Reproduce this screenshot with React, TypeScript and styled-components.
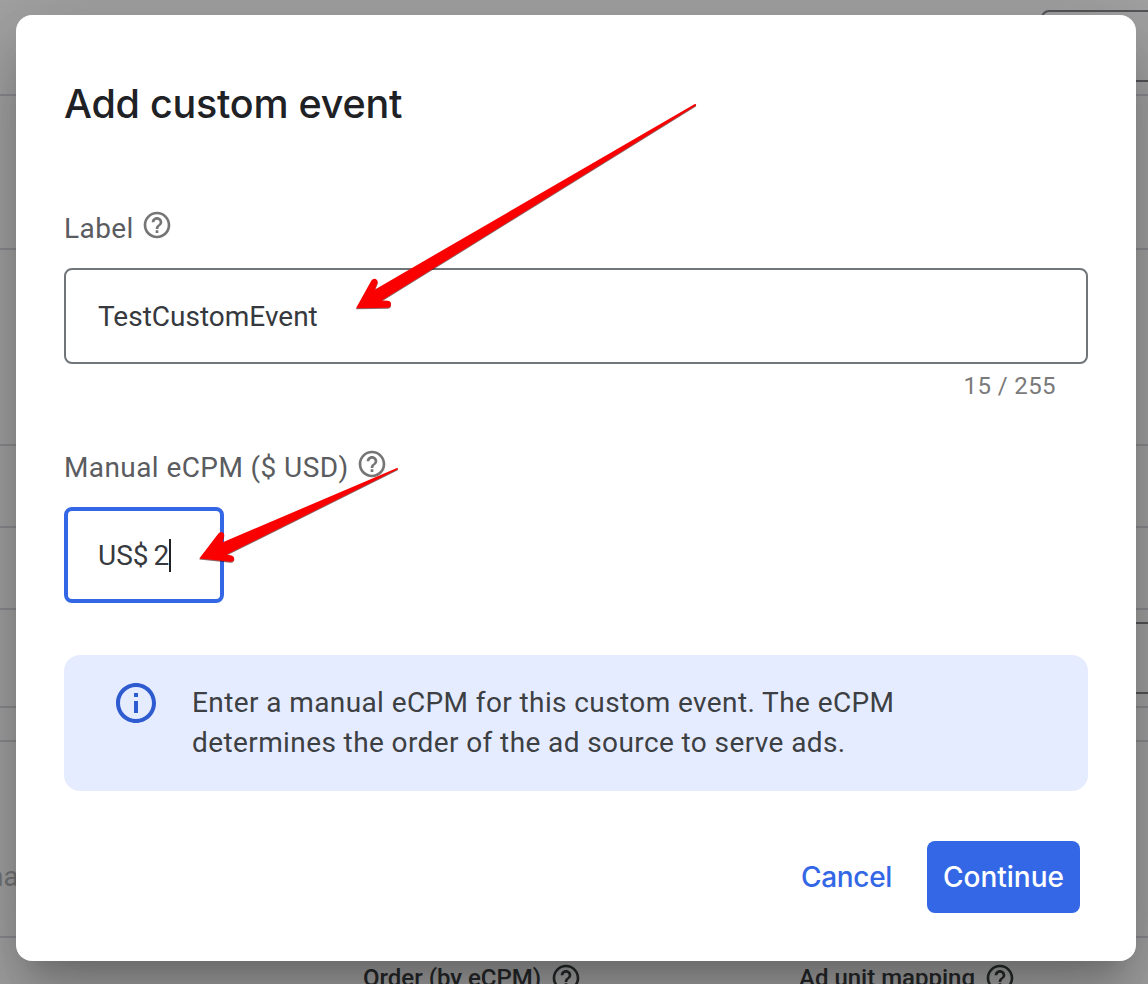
import React from 'react';
import styled, { createGlobalStyle } from 'styled-components';

const GlobalStyle = createGlobalStyle`
  * { box-sizing: border-box; }
  body {
    margin: 0;
    overflow: hidden;
    font-family: Roboto, sans-serif;
    -webkit-font-smoothing: antialiased;
  }
`;

const Screen = styled.div`
  position: relative;
  width: 1148px;
  height: 984px;
  overflow: hidden;
  background: #fff;
`;

const Page = styled.div`
  display: flex;
  flex-direction: column;
`;

const Section = styled.div<{ $height: number }>`
  display: flex;
  justify-content: flex-end;
  height: ${(p) => p.$height}px;
  border-bottom: 2px solid #dadce0;
`;

const OutlineBox = styled.div<{ $width: number; $top: number }>`
  flex: none;
  width: ${(p) => p.$width}px;
  height: 72px;
  margin-top: ${(p) => p.$top}px;
  margin-right: -20px;
  border: 2px solid #85878c;
  border-radius: 8px;
`;

const SectionName = styled.span`
  margin: 119px auto 0 -12px;
  font-size: 28px;
  line-height: 32px;
  color: #b6b8bb;
`;

const TableHead = styled.div`
  display: grid;
  grid-template-columns: 436px 1fr;
  padding: 22px 0 0 363px;
`;

const HeadCell = styled.div`
  display: flex;
  align-items: center;
  gap: 9px;
  height: 36px;
  font-size: 24px;
  font-weight: 500;
  color: #3c4043;
  white-space: nowrap;
`;

const Backdrop = styled.div`
  position: absolute;
  inset: 0;
  padding: 15px 12px 23px 16px;
  background: rgba(0, 0, 0, 0.36);
`;

const Dialog = styled.div`
  display: flex;
  flex-direction: column;
  height: 946px;
  padding: 65px 48px 48px;
  border-radius: 16px;
  background: #fff;
  box-shadow:
    0 22px 30px -14px rgba(0, 0, 0, 0.2),
    0 48px 76px 6px rgba(0, 0, 0, 0.14),
    0 18px 92px 16px rgba(0, 0, 0, 0.12);

  > * { flex-shrink: 0; }
`;

const Title = styled.h1`
  margin: 0 0 84px;
  font-family: 'Google Sans', Inter, sans-serif;
  font-size: 39.5px;
  font-weight: 500;
  line-height: 48px;
  letter-spacing: -0.26px;
  color: #202124;
`;

const FieldLabel = styled.label`
  display: flex;
  align-items: center;
  height: 32px;
  margin-bottom: 24px;
  padding-top: 2px;
  font-size: 28px;
  line-height: 32px;
  letter-spacing: 0.41px;
  color: #5a5c5f;

  svg { margin: -9px 0 0 7.5px; }
`;

const Field = styled.div<{ $focused?: boolean }>`
  display: flex;
  align-items: center;
  width: ${(p) => (p.$focused ? '160px' : '100%')};
  height: 96px;
  padding: 0 ${(p) => (p.$focused ? 30 : 32)}px;
  border: ${(p) => (p.$focused ? '4px solid #3367e6' : '2px solid #70757a')};
  border-radius: 8px;
  font-size: 28px;
  color: #36393d;
  white-space: nowrap;
`;

const Prefix = styled.span`
  margin-right: 5px;
`;

const Caret = styled.span`
  width: 2px;
  height: 33px;
  background: #202124;
`;

const Counter = styled.div`
  height: 87px;
  padding: 8px 32px 0;
  font-size: 24px;
  line-height: 28px;
  letter-spacing: 0.4px;
  text-align: right;
  color: #7a7a7a;
`;

const Notice = styled.div`
  display: flex;
  height: 136px;
  margin-top: 52px;
  padding: 24px 48px;
  gap: 32px;
  border-radius: 16px;
  background: #e6ecff;
`;

const NoticeText = styled.p`
  margin: 4px 0 0;
  font-size: 28px;
  line-height: 40px;
  letter-spacing: 0.4px;
  color: #3c4043;
  white-space: nowrap;
`;

const Actions = styled.div`
  display: flex;
  justify-content: flex-end;
  gap: 19px;
  margin-top: 50px;
  padding-right: 8px;
`;

const Button = styled.button<{ $primary?: boolean }>`
  height: 72px;
  width: ${(p) => (p.$primary ? 153 : 123)}px;
  padding: 0;
  border: 0;
  border-radius: 8px;
  background: ${(p) => (p.$primary ? '#3367e6' : 'transparent')};
  color: ${(p) => (p.$primary ? '#fff' : '#3367e6')};
  font-family: 'Google Sans', Inter, sans-serif;
  font-size: 28px;
  font-weight: 500;
  letter-spacing: ${(p) => (p.$primary ? 0 : -0.3)}px;
  white-space: nowrap;
`;

const Arrows = styled.svg`
  position: absolute;
  inset: 0;
  pointer-events: none;
  filter: drop-shadow(0 1px 0.6px rgba(60, 0, 0, 0.6));
`;

const HelpIcon = ({ color }: { color: string }) => (
  <svg width="32" height="32" viewBox="0 0 24 24" fill={color}>
    <path d="M11 18h2v-2h-2v2zm1-16C6.48 2 2 6.48 2 12s4.48 10 10 10 10-4.48 10-10S17.52 2 12 2zm0 18c-4.41 0-8-3.59-8-8s3.59-8 8-8 8 3.59 8 8-3.59 8-8 8zm0-14c-2.21 0-4 1.79-4 4h2c0-1.1.9-2 2-2s2 .9 2 2c0 2-3 1.75-3 5h2c0-2.25 3-2.5 3-5 0-2.21-1.79-4-4-4z" />
  </svg>
);

const InfoIcon = () => (
  <svg width="48" height="48" viewBox="0 0 24 24" fill="#2f5bd0">
    <path d="M11 7h2v2h-2zm0 4h2v6h-2zm1-9C6.48 2 2 6.48 2 12s4.48 10 10 10 10-4.48 10-10S17.52 2 12 2zm0 18c-4.41 0-8-3.59-8-8s3.59-8 8-8 8 3.59 8 8-3.59 8-8 8z" />
  </svg>
);

export default function App() {
  return (
    <Screen>
      <GlobalStyle />
      <Page>
        <Section $height={96}>
          <OutlineBox $width={127} $top={10} />
        </Section>
        <Section $height={154} />
        <Section $height={196} />
        <Section $height={82} />
        <Section $height={82} />
        <Section $height={98}>
          <OutlineBox $width={240} $top={12} />
        </Section>
        <Section $height={34} />
        <Section $height={196}>
          <SectionName>na</SectionName>
        </Section>
        <TableHead>
          <HeadCell>Order (by eCPM) <HelpIcon color="#3c4043" /></HeadCell>
          <HeadCell>Ad unit mapping <HelpIcon color="#3c4043" /></HeadCell>
        </TableHead>
      </Page>
      <Backdrop>
        <Dialog role="dialog">
          <Title>Add custom event</Title>
          <FieldLabel>Label <HelpIcon color="#757575" /></FieldLabel>
          <Field>TestCustomEvent</Field>
          <Counter>15 / 255</Counter>
          <FieldLabel>Manual eCPM ($ USD) <HelpIcon color="#757575" /></FieldLabel>
          <Field $focused>
            <Prefix>US$</Prefix>2<Caret />
          </Field>
          <Notice>
            <InfoIcon />
            <NoticeText>
              Enter a manual eCPM for this custom event. The eCPM
              <br />
              determines the order of the ad source to serve ads.
            </NoticeText>
          </Notice>
          <Actions>
            <Button>Cancel</Button>
            <Button $primary>Continue</Button>
          </Actions>
        </Dialog>
      </Backdrop>
      <Arrows width="1148" height="984" viewBox="0 0 1148 984" fill="#fb0000">
        <path d="M356 308.3 L371.4 280.6 Q373.2 278 375.8 279 Q378.4 280.6 377.4 283.4 L375 289.4 L694.8 104 Q696.6 103.8 696 105.4 L381.7 300.6 L388 300.8 Q391.2 301.4 391 304.4 Q390.6 307.6 387.6 307.8 Z" />
        <path d="M199.3 558.6 L218.4 533.4 Q220.4 531 223 532.4 Q225 534.2 223.8 537 L222.8 542.2 L397 468 Q398.6 468 397.8 469.3 L226.7 554.6 L231.6 555.6 Q234.6 556.6 234.2 559.4 Q233.4 562 230.6 561.8 Z" />
      </Arrows>
    </Screen>
  );
}
